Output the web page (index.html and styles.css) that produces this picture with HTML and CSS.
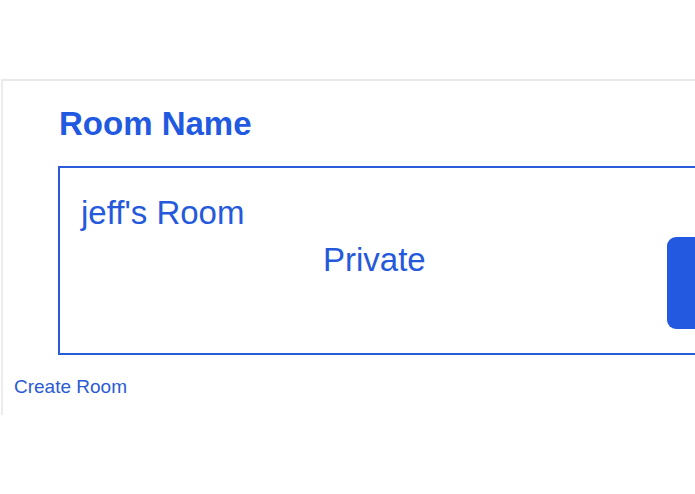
FILE: index.html
```html
<!DOCTYPE html>
<html>
<head>
<meta charset="utf-8">
<link rel="stylesheet" href="styles.css">
</head>
<body>
<div class="panel">
  <h1 class="title">Room Name</h1>
  <div class="field">
    <div class="room-name">jeff's Room</div>
    <div class="row">
      <span class="privacy">Private</span>
      <div class="btn"></div>
    </div>
  </div>
  <a class="create" href="#">Create Room</a>
</div>
</body>
</html>
```
FILE: styles.css
```css
html, body {
  margin: 0;
  padding: 0;
  background: #ffffff;
  overflow: hidden;
  width: 695px;
  height: 494px;
}
body {
  font-family: "Liberation Sans", Arial, sans-serif;
  color: #2459dc;
}
.panel {
  margin-top: 79px;
  margin-left: 1px;
  border-top: 2px solid #e9e9e9;
  border-left: 2px solid #ececec;
  padding-top: 25px;
  padding-bottom: 17px;
  width: 692px;
  overflow: hidden;
}
.title {
  margin: 0 0 24px 56px;
  font-size: 33px;
  line-height: 36px;
  font-weight: bold;
  color: #2159e0;
}
.field {
  margin-left: 55px;
  width: 700px;
  border: 2px solid #2a5bd8;
  padding: 27px 0 24px 21px;
}
.room-name {
  font-size: 33px;
  line-height: 36px;
}
.row {
  display: flex;
  align-items: flex-start;
  margin-top: 6px;
}
.privacy {
  margin-left: 242px;
  margin-top: 5px;
  font-size: 33px;
  line-height: 36px;
}
.btn {
  margin-left: 241px;
  width: 120px;
  height: 92px;
  border-radius: 9px;
  background: #2359e0;
}
.create {
  display: block;
  margin: 21px 0 0 11px;
  font-size: 19px;
  line-height: 22px;
  color: #2a5bd4;
  text-decoration: none;
}
```
